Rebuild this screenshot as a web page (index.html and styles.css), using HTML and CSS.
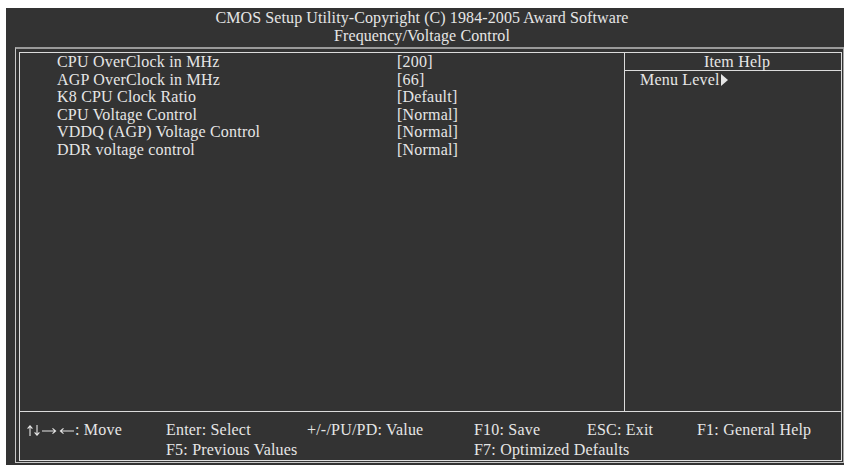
FILE: index.html
```html
<!DOCTYPE html>
<html lang="en">

<head>
    <meta charset="UTF-8">
    <title>CMOS Setup Utility - Frequency/Voltage Control</title>
    <link rel="stylesheet" href="styles.css">
</head>

<body>

    <div id="screen">
        <!-- Title -->
        <div id="titleBar">
            <div>CMOS Setup Utility-Copyright (C) 1984-2005 Award Software</div>
            <div>Frequency/Voltage Control</div>
        </div>

        <div id="outerFrame">
            <div id="innerFrame">
                <div id="mainArea">
                    <div id="itemList">
                        <div class="itemRow"><span class="itemName">CPU OverClock in MHz</span><span>[200]</span></div>
                        <div class="itemRow"><span class="itemName">AGP OverClock in MHz</span><span>[66]</span></div>
                        <div class="itemRow"><span class="itemName">K8 CPU Clock Ratio</span><span>[Default]</span></div>
                        <div class="itemRow"><span class="itemName">CPU Voltage Control</span><span>[Normal]</span></div>
                        <div class="itemRow"><span class="itemName">VDDQ (AGP) Voltage Control</span><span>[Normal]</span></div>
                        <div class="itemRow"><span class="itemName">DDR voltage control</span><span>[Normal]</span></div>
                    </div>

                    <div id="helpPanel">
                        <div id="helpTitle">Item Help</div>
                        <div id="helpBody">Menu Level<span class="arrowRight"></span></div>
                    </div>
                </div>

                <!-- Key legend -->
                <div id="keyBar">
                    <span><svg class="arrows" width="48" height="11" viewBox="0 0 48 11" fill="none" stroke="#e6e6e6" stroke-width="1.1">
                        <path d="M3 11V1M0.6 3.6L3 0.8L5.4 3.6" />
                        <path d="M10 0V10M7.6 7.4L10 10.2L12.4 7.4" />
                        <path d="M15 6H28.5M25.5 3.4L28.6 6L25.5 8.6" />
                        <path d="M33.4 6H47M36.5 3.4L33.4 6L36.5 8.6" />
                    </svg>: Move</span>
                    <span>Enter: Select</span>
                    <span>+/-/PU/PD: Value</span>
                    <span>F10: Save</span>
                    <span>ESC: Exit</span>
                    <span>F1: General Help</span>
                    <span></span>
                    <span>F5: Previous Values</span>
                    <span></span>
                    <span>F7: Optimized Defaults</span>
                </div>
            </div>
        </div>
    </div>

</body>

</html>
```

FILE: styles.css
```css
body {
    margin: 0;
    padding: 0;
    background-color: #fff;
    font-family: 'Liberation Serif', 'Times New Roman', serif;
    font-size: 16px;
    letter-spacing: 0.2px;
    color: #e6e6e6;
}

#screen {
    margin: 8px 0 0 6px;
    width: 838px;
    height: 457px;
    background-color: #333;
    box-sizing: border-box;
    padding-bottom: 2px;
}

#titleBar {
    height: 39px;
    box-sizing: border-box;
    padding: 1px 6px 0 0;
    line-height: 18px;
    text-align: center;
    letter-spacing: 0.1px;
}

#outerFrame {
    margin-left: 9px;
    border-top: 2px solid #9a9a9a;
    border-left: 1px solid #c8c8c8;
    border-right: 1px solid #a8a8a8;
    border-bottom: 1px solid #c8c8c8;
    padding: 3px 1px 1px 3px;
}

#innerFrame {
    border: 1px solid #dcdcdc;
}

#mainArea {
    display: grid;
    grid-template-columns: 605px 1fr;
    height: 358px;
    border-bottom: 1px solid #dcdcdc;
}

#itemList {
    border-right: 1px solid #dcdcdc;
    padding-left: 37px;
    line-height: 17.6px;
}

.itemRow {
    display: flex;
}

.itemName {
    width: 340px;
}

#helpTitle {
    height: 17px;
    line-height: 17px;
    text-align: center;
    border-bottom: 1px solid #dcdcdc;
    padding-left: 8px;
}

#helpBody {
    padding-left: 15px;
    line-height: 17.6px;
}

.arrowRight {
    display: inline-block;
    width: 0;
    height: 0;
    border-top: 6px solid transparent;
    border-bottom: 6px solid transparent;
    border-left: 7px solid #e6e6e6;
    margin-left: 1px;
    vertical-align: -1px;
}

#keyBar {
    display: grid;
    grid-template-columns: 139px 141px 167px 113px 110px 1fr;
    height: 48px;
    box-sizing: border-box;
    padding: 9px 0 0 7px;
    line-height: 18.6px;
    white-space: nowrap;
}

.arrows {
    vertical-align: -1px;
}
```
